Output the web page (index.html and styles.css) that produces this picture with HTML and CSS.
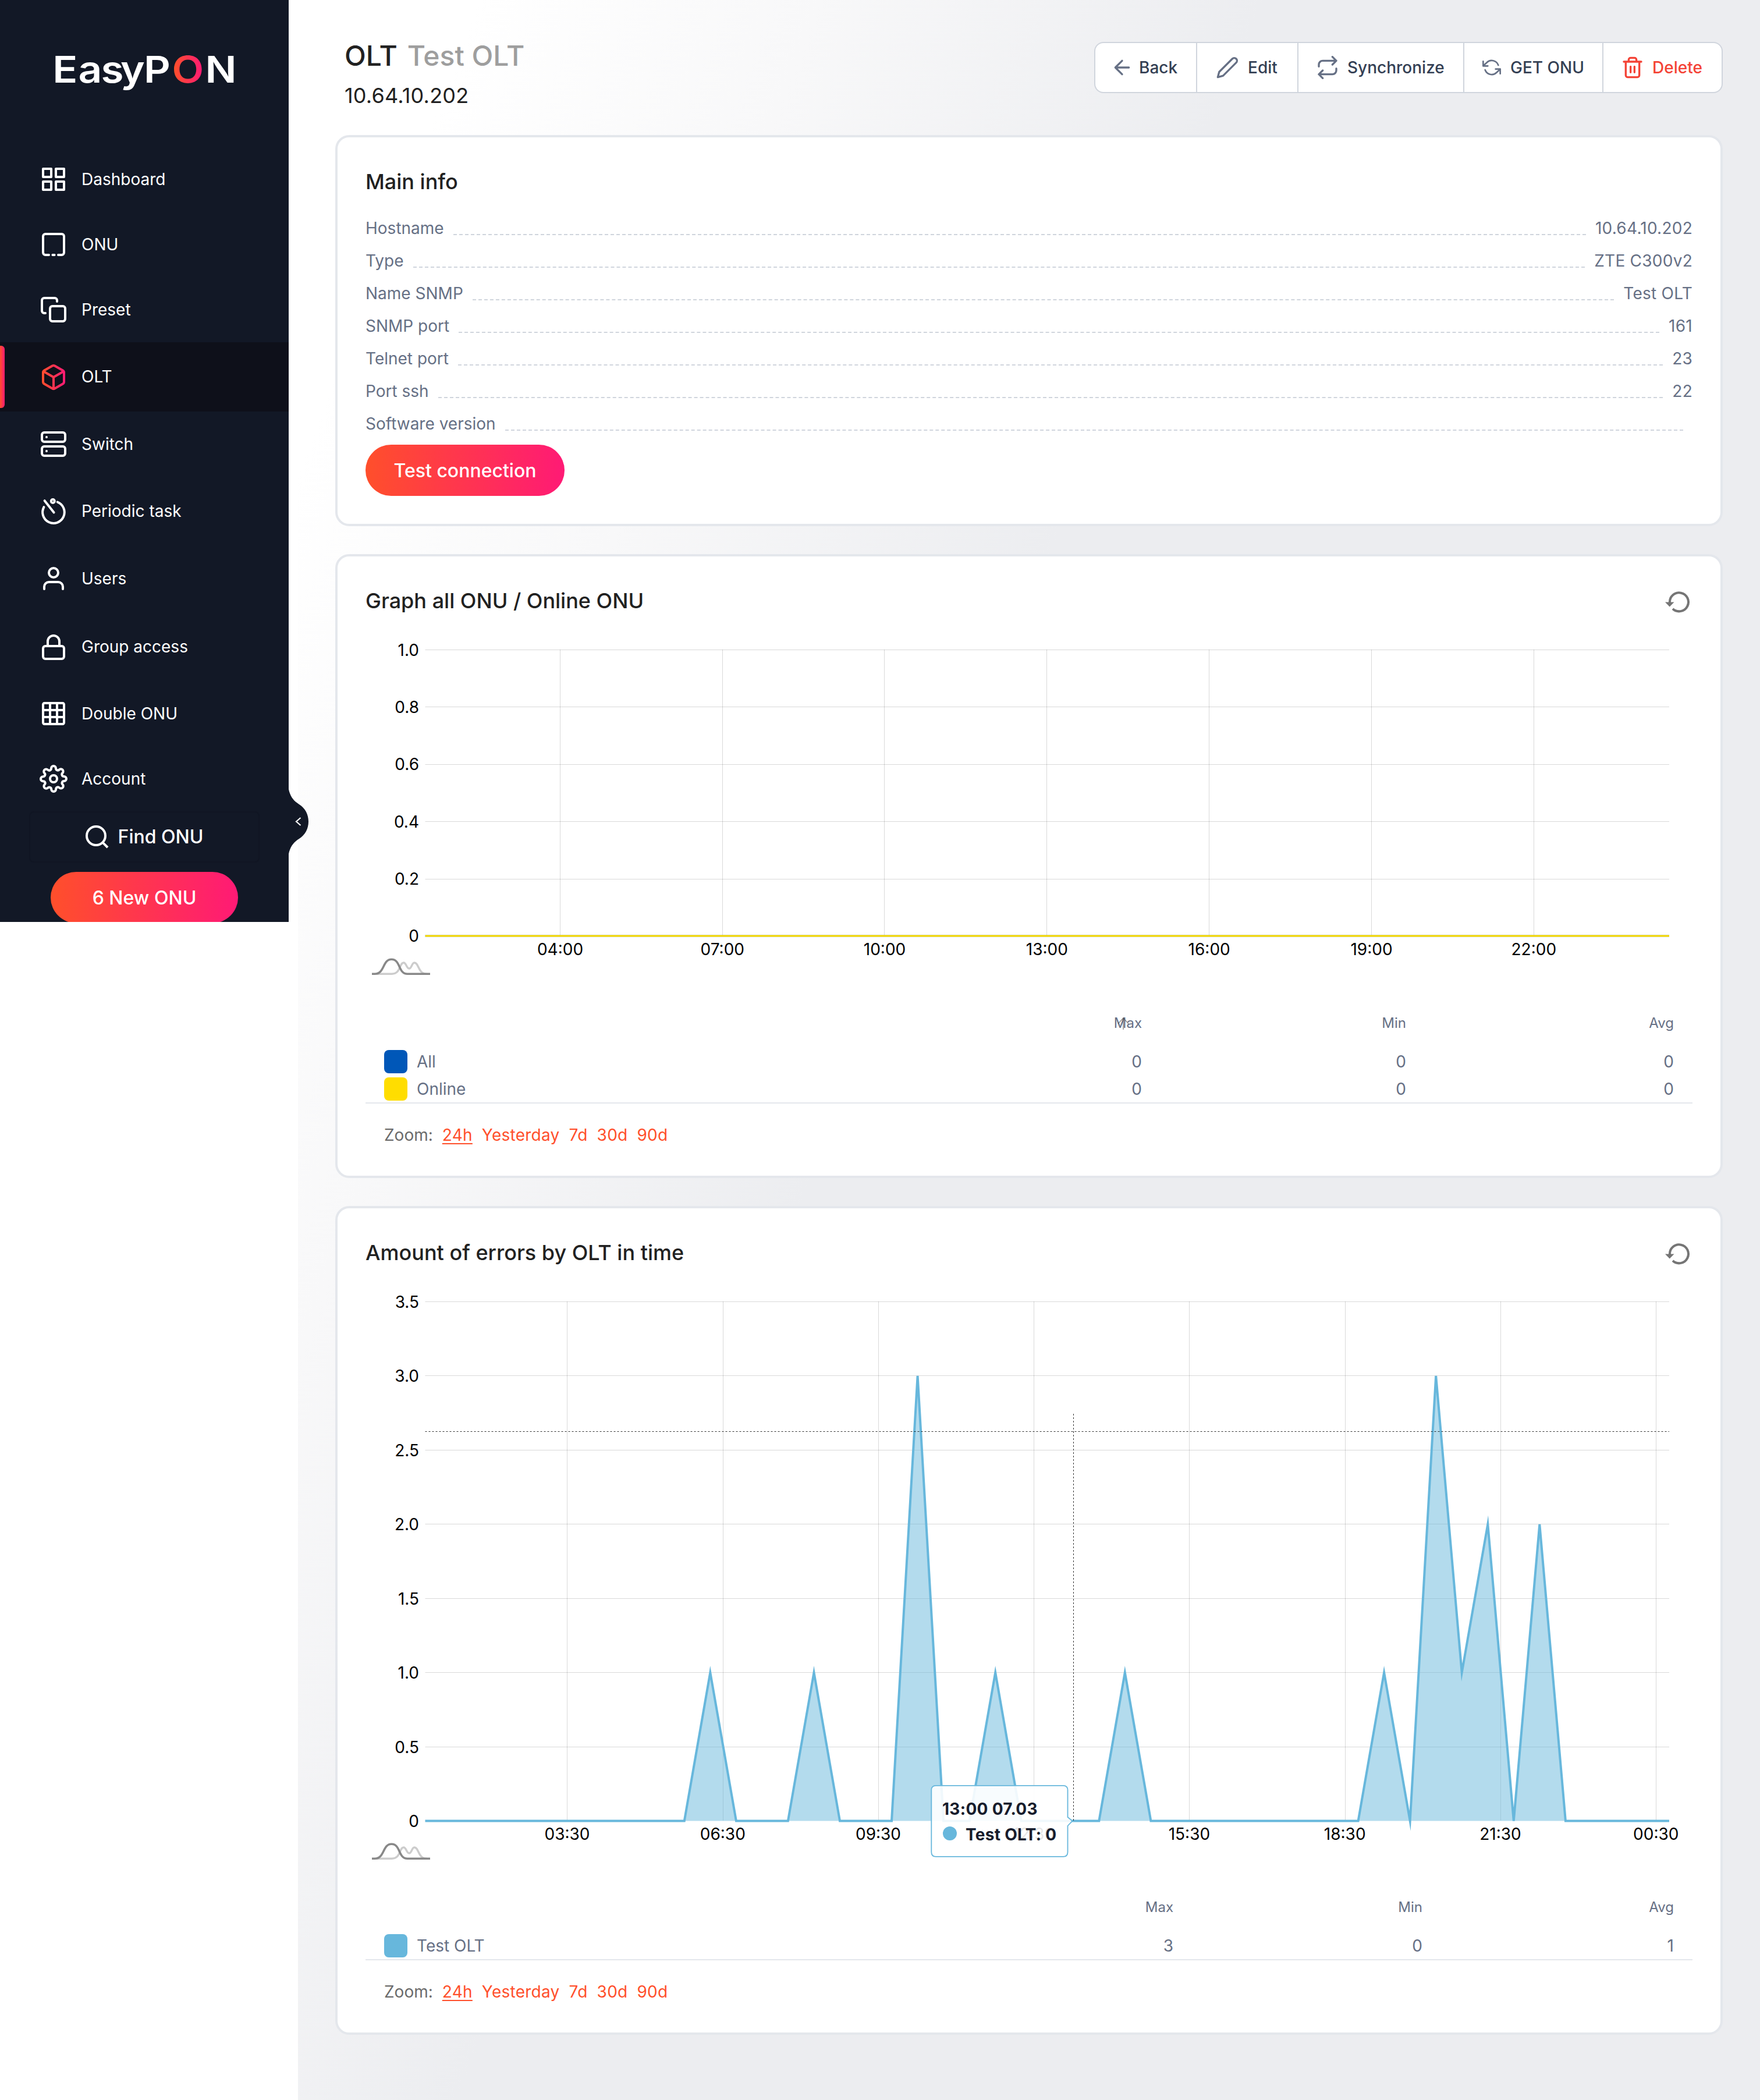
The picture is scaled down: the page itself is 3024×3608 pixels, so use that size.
FILE: index.html
```html
<!DOCTYPE html>
<html lang="en">
<head>
<meta charset="utf-8">
<title>EasyPON – OLT</title>
<link rel="stylesheet" href="styles.css">
</head>
<body>
<svg class="defs" width="0" height="0" aria-hidden="true">
  <defs>
    <linearGradient id="brand" gradientUnits="userSpaceOnUse" x1="2" y1="0" x2="22" y2="0"><stop offset="0" stop-color="#ff4f2b"/><stop offset="1" stop-color="#ff1a75"/></linearGradient>
    <symbol id="amlogo" viewBox="0 0 100 30">
      <path d="M8 27.3H34C50 27.3 47 8 54.5 8C59 8 59.5 18 64 18C68.5 18 68.5 8 73 8C81 8 79 27.3 94 27.3" fill="none" stroke="#ccc" stroke-width="3.4"/>
      <path d="M0 27.3H5C22 27.3 18 2.3 33.7 2.3S45 27.3 61 27.3H100" fill="none" stroke="#888" stroke-width="3.6"/>
    </symbol>
  </defs>
</svg>
<div class="app">
  <aside class="sidebar">
    <div class="logo">
      <svg width="320" height="84" viewBox="90 80 320 84">
        <defs><linearGradient id="logoO" gradientUnits="userSpaceOnUse" x1="267" y1="0" x2="311" y2="0"><stop offset="0" stop-color="#ff4f2b"/><stop offset="1" stop-color="#ff1a75"/></linearGradient></defs>
        <text class="logo-text" transform="scale(1.12 1)" x="80.6 120.1 154.9 184.8 220.5 263.8 314.7" y="142">EasyP<tspan class="logo-o">O</tspan>N</text>
      </svg>
    </div>
    <nav class="nav">
      <a class="nav-item"><svg class="ico" viewBox="0 0 24 24"><rect x="3" y="3" width="7" height="7"/><rect x="14" y="3" width="7" height="7"/><rect x="14" y="14" width="7" height="7"/><rect x="3" y="14" width="7" height="7"/></svg><span>Dashboard</span></a>
      <a class="nav-item"><svg class="ico" viewBox="0 0 24 24"><path d="M8 21H5a2 2 0 0 1-2-2V5a2 2 0 0 1 2-2h14a2 2 0 0 1 2 2v14a2 2 0 0 1-2 2h-3M11.2 21h1.6"/></svg><span>ONU</span></a>
      <a class="nav-item"><svg class="ico" viewBox="0 0 24 24"><rect x="9" y="9" width="13" height="13" rx="2"/><path d="M5 15H4a2 2 0 0 1-2-2V4a2 2 0 0 1 2-2h9a2 2 0 0 1 2 2v1"/></svg><span>Preset</span></a>
      <a class="nav-item active"><svg class="ico" viewBox="0 0 24 24"><path d="M21 16V8a2 2 0 0 0-1-1.73l-7-4a2 2 0 0 0-2 0l-7 4A2 2 0 0 0 3 8v8a2 2 0 0 0 1 1.73l7 4a2 2 0 0 0 2 0l7-4A2 2 0 0 0 21 16zM3.27 6.96L12 12.01l8.73-5.05M12.01 22.08L12 12"/></svg><span>OLT</span></a>
      <a class="nav-item"><svg class="ico" viewBox="0 0 24 24"><rect x="2" y="2" width="20" height="8" rx="2"/><rect x="2" y="14" width="20" height="8" rx="2"/><path d="M6 6h.01M6 18h.01"/></svg><span>Switch</span></a>
      <a class="nav-item"><svg class="ico" viewBox="0 0 24 24"><path d="M15.4 3.8a9.4 9.4 0 1 1-11.7 4.3M4.3 2.6l8 10.1"/><circle cx="11.4" cy="3" r="1.5"/></svg><span>Periodic task</span></a>
      <a class="nav-item"><svg class="ico" viewBox="0 0 24 24"><path d="M20 21v-2a4 4 0 0 0-4-4H8a4 4 0 0 0-4 4v2"/><circle cx="12" cy="7" r="4"/></svg><span>Users</span></a>
      <a class="nav-item"><svg class="ico" viewBox="0 0 24 24"><rect x="3" y="11" width="18" height="11" rx="2"/><path d="M7 11V7a5 5 0 0 1 10 0v4"/></svg><span>Group access</span></a>
      <a class="nav-item"><svg class="ico" viewBox="0 0 24 24"><rect x="3" y="3" width="18" height="18" rx="1.2"/><path d="M3 9h18M3 15h18M9 3v18M15 3v18"/></svg><span>Double ONU</span></a>
      <a class="nav-item"><svg class="ico" viewBox="0 0 24 24"><circle cx="12" cy="12" r="3"/><path d="M19.4 15a1.65 1.65 0 0 0 .33 1.82l.06.06a2 2 0 0 1 0 2.83 2 2 0 0 1-2.83 0l-.06-.06a1.65 1.65 0 0 0-1.82-.33 1.65 1.65 0 0 0-1 1.51V21a2 2 0 0 1-2 2 2 2 0 0 1-2-2v-.09A1.65 1.65 0 0 0 9 19.4a1.65 1.65 0 0 0-1.82.33l-.06.06a2 2 0 0 1-2.83 0 2 2 0 0 1 0-2.83l.06-.06a1.65 1.65 0 0 0 .33-1.82 1.65 1.65 0 0 0-1.51-1H3a2 2 0 0 1-2-2 2 2 0 0 1 2-2h.09A1.65 1.65 0 0 0 4.6 9a1.65 1.65 0 0 0-.33-1.82l-.06-.06a2 2 0 0 1 0-2.83 2 2 0 0 1 2.83 0l.06.06a1.65 1.65 0 0 0 1.82.33H9a1.65 1.65 0 0 0 1-1.51V3a2 2 0 0 1 2-2 2 2 0 0 1 2 2v.09a1.65 1.65 0 0 0 1 1.51 1.65 1.65 0 0 0 1.82-.33l.06-.06a2 2 0 0 1 2.83 0 2 2 0 0 1 0 2.83l-.06.06a1.65 1.65 0 0 0-.33 1.82V9a1.65 1.65 0 0 0 1.51 1H21a2 2 0 0 1 2 2 2 2 0 0 1-2 2h-.09a1.65 1.65 0 0 0-1.51 1z"/></svg><span>Account</span></a>
    </nav>
    <div class="find"><svg class="find-ico" viewBox="0 0 24 24"><circle cx="11" cy="11" r="8"/><path d="M21 21l-4.35-4.35"/></svg><span>Find ONU</span></div>
    <div class="new-wrap"><button class="btn-grad btn-new">6 New ONU</button></div>
    <svg class="toggle" width="34" height="111" viewBox="0 0 34 111"><path d="M0 0C3 14 10 21 18 26C28 32 34 43 34 55.5C34 68 28 79 18 85C10 90 3 97 0 111z" fill="#121826"/><path d="M20.5 49L13 55.5L20.5 62" fill="none" stroke="#fff" stroke-width="2.2"/></svg>
  </aside>

  <main class="main">
    <header class="head">
      <div>
        <h1 class="title">OLT<span>Test OLT</span></h1>
        <p class="ip">10.64.10.202</p>
      </div>
      <div class="actions">
        <button class="act act-back"><svg class="i40" viewBox="0 0 24 24"><path d="M19 12H5M12 19l-7-7 7-7"/></svg>Back</button>
        <button class="act act-edit"><svg class="i40" viewBox="0 0 24 24"><path d="M17 3a2.828 2.828 0 1 1 4 4L7.5 20.5 2 22l1.5-5.5L17 3z"/></svg>Edit</button>
        <button class="act act-sync"><svg class="i40" viewBox="0 0 24 24"><path d="M17 1l4 4-4 4M3 11V9a4 4 0 0 1 4-4h14M7 23l-4-4 4-4M21 13v2a4 4 0 0 1-4 4H3"/></svg>Synchronize</button>
        <button class="act act-get"><svg class="i32" viewBox="0 0 24 24"><path d="M1 4v6h6M23 20v-6h-6M20.49 9A9 9 0 0 0 5.64 5.64L1 10m22 4l-4.64 4.36A9 9 0 0 1 3.51 15"/></svg>GET ONU</button>
        <button class="act act-del"><svg class="i40" viewBox="0 0 24 24"><path d="M3 6h18M19 6v14a2 2 0 0 1-2 2H7a2 2 0 0 1-2-2V6m3 0V4a2 2 0 0 1 2-2h4a2 2 0 0 1 2 2v2M10 11v6M14 11v6"/></svg>Delete</button>
      </div>
    </header>

    <section class="card">
      <h2 class="card-title">Main info</h2>
      <dl class="info">
        <div class="row"><dt>Hostname</dt><i></i><dd>10.64.10.202</dd></div>
        <div class="row"><dt>Type</dt><i></i><dd>ZTE C300v2</dd></div>
        <div class="row"><dt>Name SNMP</dt><i></i><dd>Test OLT</dd></div>
        <div class="row"><dt>SNMP port</dt><i></i><dd>161</dd></div>
        <div class="row"><dt>Telnet port</dt><i></i><dd>23</dd></div>
        <div class="row"><dt>Port ssh</dt><i></i><dd>22</dd></div>
        <div class="row"><dt>Software version</dt><i></i><dd></dd></div>
      </dl>
      <button class="btn-grad btn-test">Test connection</button>
    </section>

    <section class="card">
      <div class="card-head"><h2 class="card-title">Graph all ONU / Online ONU</h2>
        <svg class="reload" width="44" height="40" viewBox="0 0 44 40"><path d="M9 20.5A16 16 0 1 1 14 31" fill="none" stroke="#757575" stroke-width="4"/><path d="M1 19.5H16.5L8.7 27.5z" fill="#757575"/></svg></div>
      <svg class="chart" width="2280" height="644" viewBox="628 1056 2280 644">
        <path class="grid" d="M730.5 1116.5H2868M730.5 1214.5H2868M730.5 1313.5H2868M730.5 1411.5H2868M730.5 1510.5H2868M962.5 1116V1608M1241.5 1116V1608M1519.5 1116V1608M1798.5 1116V1608M2077.5 1116V1608M2356.5 1116V1608M2635.5 1116V1608"/>
        <path d="M730.5 1608H2868" stroke="#0057b8" stroke-opacity=".35" stroke-width="4"/>
        <path d="M730.5 1608H2868" stroke="#fd0" stroke-width="3"/>
        <g class="lab lab-y"><text x="720" y="1126.5">1.0</text><text x="720" y="1224.5">0.8</text><text x="720" y="1323">0.6</text><text x="720" y="1421.5">0.4</text><text x="720" y="1520">0.2</text><text x="720" y="1618">0</text></g>
        <g class="lab lab-x"><text x="962.5" y="1640.6">04:00</text><text x="1241.3" y="1640.6">07:00</text><text x="1520" y="1640.6">10:00</text><text x="1798.9" y="1640.6">13:00</text><text x="2077.7" y="1640.6">16:00</text><text x="2356.5" y="1640.6">19:00</text><text x="2635.3" y="1640.6">22:00</text></g>
        <use href="#amlogo" x="639" y="1646" width="100" height="30"/>
      </svg>
      <div class="legend cols-a">
        <div class="lg-head"><span></span><span class="sorted">Max<svg class="sort" width="20" height="22" viewBox="0 0 20 22"><path d="M10 21V1M1 11L10 1L19 11"/></svg></span><span>Min</span><span>Avg</span></div>
        <div class="lg-row"><span class="name"><b class="sw sw-all"></b>All</span><span>0</span><span>0</span><span>0</span></div>
        <div class="lg-row"><span class="name"><b class="sw sw-online"></b>Online</span><span>0</span><span>0</span><span>0</span></div>
      </div>
      <div class="zoom"><span>Zoom:</span><a class="cur">24h</a><a>Yesterday</a><a>7d</a><a>30d</a><a>90d</a></div>
    </section>

    <section class="card">
      <div class="card-head"><h2 class="card-title">Amount of errors by OLT in time</h2>
        <svg class="reload" width="44" height="40" viewBox="0 0 44 40"><path d="M9 20.5A16 16 0 1 1 14 31" fill="none" stroke="#757575" stroke-width="4"/><path d="M1 19.5H16.5L8.7 27.5z" fill="#757575"/></svg></div>
      <svg class="chart" width="2280" height="1043" viewBox="628 2176 2280 1043">
        <path class="grid" d="M730.5 2236.5H2868M730.5 2363.5H2868M730.5 2491.5H2868M730.5 2618.5H2868M730.5 2746.5H2868M730.5 2873.5H2868M730.5 3001.5H2868M974.5 2236V3128M1242.5 2236V3128M1509.5 2236V3128M1776.5 2236V3128M2043.5 2236V3128M2311.5 2236V3128M2578.5 2236V3128M2845.5 2236V3128"/>
        <path d="M730.5 3128.5H1175.8L1220.3 2873.7L1264.9 3128.5H1353.9L1398.5 2873.7L1443 3128.5H1532L1576.6 2363.8L1621.1 3128.5H1665.6L1710.2 2873.7L1754.7 3128.5H1888.3L1932.8 2873.7L1977.4 3128.5H2333.6L2378.1 2873.7L2422.7 3128.5L2467.2 2363.8L2511.7 2873.7L2556.3 2618.8L2600.8 3128.5L2645.3 2618.8L2689.9 3128.5H2868" fill="#67b7dc" fill-opacity=".5" stroke="#67b7dc" stroke-width="4" stroke-miterlimit="10"/>
        <path class="cursor" d="M730.5 2459.5H2868M1844.5 3128V2428"/>
        <g class="lab lab-y"><text x="720" y="2246.5">3.5</text><text x="720" y="2374">3.0</text><text x="720" y="2501.5">2.5</text><text x="720" y="2628.5">2.0</text><text x="720" y="2756.5">1.5</text><text x="720" y="2883.5">1.0</text><text x="720" y="3011.5">0.5</text><text x="720" y="3138.5">0</text></g>
        <g class="lab lab-x"><text x="974.5" y="3160.6">03:30</text><text x="1241.8" y="3160.6">06:30</text><text x="1509" y="3160.6">09:30</text><text x="1776.2" y="3160.6">12:30</text><text x="2043.4" y="3160.6">15:30</text><text x="2310.7" y="3160.6">18:30</text><text x="2578" y="3160.6">21:30</text><text x="2845.3" y="3160.6">00:30</text></g>
        <path class="tip" d="M1608 3067.8H1827Q1834.5 3067.8 1834.5 3075.5V3122L1842.5 3128.5L1834.5 3137V3182Q1834.5 3189.8 1827 3189.8H1608Q1600.3 3189.8 1600.3 3182V3075.5Q1600.3 3067.8 1608 3067.8z"/>
        <circle cx="1632" cy="3150" r="12" fill="#67b7dc"/>
        <text class="tip-text" x="1619" y="3118">13:00 07.03</text>
        <text class="tip-text" x="1659" y="3162">Test OLT: 0</text>
        <use href="#amlogo" x="639" y="3166" width="100" height="30"/>
      </svg>
      <div class="legend cols-b">
        <div class="lg-head"><span></span><span>Max</span><span>Min</span><span>Avg</span></div>
        <div class="lg-row"><span class="name"><b class="sw sw-test"></b>Test OLT</span><span>3</span><span>0</span><span>1</span></div>
      </div>
      <div class="zoom"><span>Zoom:</span><a class="cur">24h</a><a>Yesterday</a><a>7d</a><a>30d</a><a>90d</a></div>
    </section>
  </main>
</div>
</body>
</html>
```
FILE: styles.css
```css
* { box-sizing: border-box; margin: 0; padding: 0; }
body { background: #fff; font-family: Inter, "Liberation Sans", sans-serif; font-size: 28px; color: #212121; }
button { font: inherit; border: 0; background: none; }
.defs { position: absolute; }
.app { display: flex; align-items: flex-start; gap: 16px; width: 3024px; min-height: 3608px; }

.sidebar { position: relative; flex: none; width: 496px; height: 1584px; background: #121826; color: #fff; }
.logo { height: 252px; padding: 80px 0 0 90px; }
.logo svg { display: block; }
.logo-text { font-size: 63.5px; font-weight: 600; fill: #fff; }
.logo-o { fill: url(#logoO); }
.nav { display: grid; grid-template-rows: 112px 112px 112px 119px 112px 119px 112px 123px 106px 118px; }
.nav-item { position: relative; display: flex; align-items: center; gap: 24px; padding-left: 68px; }
.nav-item span { padding-bottom: 1px; }
.nav-item.active { background: #0e101a; }
.nav-item.active::before { content: ""; position: absolute; left: 0; top: 6px; bottom: 6px; width: 8px; border-radius: 0 6px 6px 0; background: linear-gradient(90deg, #ff4f2b, #ff1a75); }
.ico { width: 48px; height: 48px; fill: none; stroke: #fff; stroke-width: 2; stroke-linecap: round; stroke-linejoin: round; }
.active .ico { stroke: url(#brand); }
.find { display: flex; align-items: center; justify-content: center; gap: 12px; width: 396px; height: 88px; margin: -3px 0 0 50px; padding: 0 4px 1px 0; border: 2px solid #101523; border-radius: 8px; font-size: 32px; font-weight: 500; }
.find-ico { width: 48px; height: 48px; fill: none; stroke: #fff; stroke-width: 2; }
.new-wrap { height: 102px; padding: 16px 0 0 87px; overflow: hidden; }
.btn-grad { display: block; height: 88px; border-radius: 44px; background: linear-gradient(90deg, #ff4f2b, #ff1a75); color: #fff; font-size: 32px; font-weight: 500; }
.btn-new { width: 322px; }
.btn-test { width: 342px; }
.toggle { position: absolute; left: 495.5px; top: 1356px; }

.main { flex: none; width: 2512px; height: 3608px; padding: 68px 64px 0; background: linear-gradient(111deg, #fff 8%, #f8f8f9 23%, #ecedf0 42.6%); }
.head { display: flex; justify-content: space-between; height: 164px; }
.title { display: flex; gap: 17px; padding-left: 16px; font-size: 48px; line-height: 56px; font-weight: 500; }
.title span { color: #9e9e9e; }
.ip { margin-top: 20px; padding-left: 16px; font-size: 36px; line-height: 40px; letter-spacing: .2px; }
.actions { display: flex; width: 1080px; height: 88px; margin-top: 4px; border: 2px solid #d0d5dd; border-radius: 16px; background: #fff; }
.act { display: flex; align-items: center; color: #344054; font-size: 28px; font-weight: 500; white-space: nowrap; }
.act + .act { border-left: 2px solid #d0d5dd; }
.act svg { flex: none; fill: none; stroke: #667085; stroke-width: 2; stroke-linecap: round; stroke-linejoin: round; }
.i40 { width: 40px; height: 40px; }
.i32 { width: 32px; height: 32px; }
.act-back { width: 173px; padding-left: 26px; gap: 9px; }
.act-edit { width: 174px; padding-left: 32px; gap: 15px; }
.act-sync { width: 285px; padding-left: 30px; gap: 14px; }
.act-get { width: 239px; padding-left: 31px; gap: 16px; }
.act-del { flex: 1; padding-left: 30px; gap: 14px; color: #f44336; }
.act-del svg { stroke: #f44336; }

.card { width: 2384px; padding: 52px 48px 48px; border: 4px solid #e4e7ec; border-radius: 24px; background: #fff; }
.card + .card { margin-top: 48px; padding-bottom: 50px; }
.card-head { display: flex; justify-content: space-between; height: 48px; }
.card-title { font-size: 36px; line-height: 48px; font-weight: 500; }
.reload { margin: 7px 4px 0 0; }
.info { margin-top: 36px; color: #667085; }
.row { display: flex; gap: 16px; height: 40px; margin-bottom: 16px; line-height: 40px; }
.row i { flex: 1; height: 32px; border-bottom: 2px dashed #d0d5dd; }
.row dd { letter-spacing: .25px; }
.chart { display: block; }
.grid { fill: none; stroke: #000; stroke-opacity: .15; }
.lab { font-size: 28px; fill: #000; }
.lab-y { text-anchor: end; }
.lab-x { text-anchor: middle; }
.cursor { fill: none; stroke: #000; stroke-opacity: .8; stroke-dasharray: 3 3; }
.tip { fill: #fff; fill-opacity: .9; stroke: #67b7dc; stroke-width: 1.8; }
.tip-text { font-size: 28px; font-weight: 700; fill: #171c2c; letter-spacing: .3px; }

.legend { margin-top: 42px; border-bottom: 2px solid #e4e7ec; color: #667085; }
.lg-head, .lg-row { display: grid; align-items: center; text-align: right; }
.cols-a > div { grid-template-columns: 880px 454px 454px 460px; }
.cols-b > div { grid-template-columns: 960px 428px 428px 432px; }
.lg-head { height: 32px; margin-bottom: 26px; font-size: 24px; line-height: 32px; }
.lg-row { height: 47px; }
.name { display: flex; align-items: center; gap: 16px; padding-left: 32px; }
.sw { width: 40px; height: 40px; border-radius: 8px; }
.sw-all { background: #0057b8; }
.sw-online { background: #fd0; }
.sw-test { background: #67b7dc; }
.sorted { position: relative; }
.sort { position: absolute; right: 22px; top: 6px; fill: none; stroke: #444; stroke-opacity: .6; stroke-width: 1.5; }
.zoom { display: flex; gap: 16px; height: 40px; margin: 34px 0 0 32px; line-height: 40px; color: #6b6b6b; }
.zoom a { color: #ff4f2b; letter-spacing: .25px; }
.zoom .cur { text-decoration: underline; text-decoration-thickness: 2px; text-underline-offset: 4px; }
```
